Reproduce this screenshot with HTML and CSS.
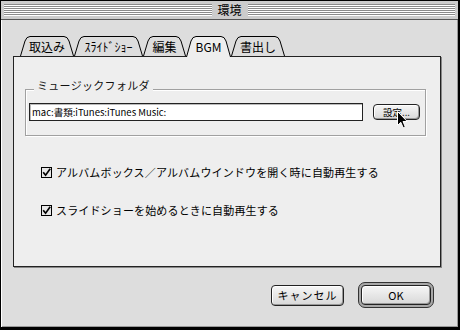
FILE: index.html
```html
<!DOCTYPE html>
<html lang="ja">
<head>
    <meta charset="UTF-8">
    <title>環境</title>
    <link rel="stylesheet" href="styles.css">
</head>
<body>
    <div class="window">
        <div class="titlebar">
            <div class="stripes"></div>
            <div class="title">環境</div>
            <div class="stripes"></div>
        </div>

        <div class="tabs">
            <div class="tab" style="width:54px">
                <svg width="54" height="20"><path d="M0.5 20 L5 5 Q6.5 0.5 10 0.5 H44 Q47.5 0.5 49 5 L53.5 20"/></svg>
                <span>取込み</span>
            </div>
            <div class="tab" style="width:69px">
                <svg width="69" height="20"><path d="M0.5 20 L5 5 Q6.5 0.5 10 0.5 H59 Q62.5 0.5 64 5 L68.5 20"/></svg>
                <span>ｽﾗｲﾄﾞｼｮｰ</span>
            </div>
            <div class="tab" style="width:43px">
                <svg width="43" height="20"><path d="M0.5 20 L5 5 Q6.5 0.5 10 0.5 H33 Q36.5 0.5 38 5 L42.5 20"/></svg>
                <span>編集</span>
            </div>
            <div class="tab active" style="width:45px">
                <svg width="45" height="21"><path d="M0.5 21 L5 5 Q6.5 0.5 10 0.5 H35 Q38.5 0.5 40 5 L44.5 21"/></svg>
                <span>BGM</span>
            </div>
            <div class="tab" style="width:54px">
                <svg width="54" height="20"><path d="M0.5 20 L5 5 Q6.5 0.5 10 0.5 H44 Q47.5 0.5 49 5 L53.5 20"/></svg>
                <span>書出し</span>
            </div>
        </div>

        <div class="panel">
            <div class="group">
                <span class="group-label">ミュージックフォルダ</span>
                <div class="group-row">
                    <div class="field">mac:書類:iTunes:iTunes Music:</div>
                    <div class="btn btn-small">
                        設定...
                        <svg class="cursor" width="11" height="18"><path d="M0.5 0.5 L0.5 14.5 L3.8 11.3 L6.2 16.8 L8.3 15.9 L6 10.5 L10.3 10.5 Z"/></svg>
                    </div>
                </div>
            </div>

            <div class="checks">
                <label class="check">
                    <span class="box"><svg width="9" height="9"><path d="M1.2 4.2 L3.6 7.2 L8.2 0.8"/></svg></span>
                    アルバムボックス／アルバムウインドウを開く時に自動再生する
                </label>
                <label class="check">
                    <span class="box"><svg width="9" height="9"><path d="M1.2 4.2 L3.6 7.2 L8.2 0.8"/></svg></span>
                    スライドショーを始めるときに自動再生する
                </label>
            </div>
        </div>

        <div class="buttons">
            <div class="btn btn-cancel">キャンセル</div>
            <div class="default">
                <div class="btn btn-ok">OK</div>
            </div>
        </div>
    </div>
</body>
</html>
```

FILE: styles.css
```css
body {
    margin: 0;
    font-family: "Noto Sans CJK JP", "Liberation Sans", sans-serif;
    font-size: 11px;
    color: #000;
    background: #fff;
}
.window {
    width: 460px;
    height: 330px;
    box-sizing: border-box;
    border: 1px solid #000;
    border-right-width: 2px;
    border-bottom-width: 3px;
    background: #dddddd;
    box-shadow: inset 1px 1px 0 #fff, inset -1px -1px 0 #999;
}
.titlebar {
    display: flex;
    align-items: center;
    height: 18px;
    padding: 0 3px;
    background: #cccccc;
    border-bottom: 1px solid #555;
}
.stripes {
    flex: 1;
    height: 12px;
    background: repeating-linear-gradient(to bottom, #8a8a8a 0 1px, #fff 1px 2px);
}
.title {
    padding: 0 6px;
    font-size: 12px;
    line-height: 18px;
}

/* tabs */
.tabs {
    display: flex;
    height: 20px;
    margin: 16px 0 0 19px;
}
.tab {
    position: relative;
    height: 20px;
    display: flex;
    align-items: center;
    justify-content: center;
    font-size: 12px;
}
.tab svg {
    position: absolute;
    left: 0;
    top: 0;
}
.tab path {
    fill: #dddddd;
    stroke: #000;
    stroke-width: 1;
}
.tab span {
    position: relative;
    line-height: 14px;
    padding-top: 1px;
}
.tab.active {
    z-index: 1;
}
.tab.active path {
    fill: #eeeeee;
}

/* panel */
.panel {
    width: 428px;
    height: 211px;
    margin-left: 12px;
    box-sizing: border-box;
    border: 1px solid #222;
    background: #eeeeee;
    box-shadow: 1px 1px 0 #888;
}
.group {
    position: relative;
    width: 401px;
    height: 47px;
    margin: 32px 0 0 11px;
    padding: 13px 0 0 3px;
    box-sizing: border-box;
    border: 1px solid #a0a0a0;
    box-shadow: 1px 1px 0 #fff, inset 1px 1px 0 #fff;
}
.group-label {
    position: absolute;
    left: 8px;
    top: -11px;
    padding: 0 3px;
    background: #eeeeee;
    line-height: 12px;
    letter-spacing: 0.3px;
    color: #111;
}
.group-row {
    display: flex;
    align-items: center;
}
.field {
    width: 334px;
    height: 18px;
    box-sizing: border-box;
    border: 1px solid #222;
    background: #fff;
    box-shadow: inset 1px 1px 0 #bbb;
    padding-left: 2px;
    font-size: 9.5px;
    line-height: 16px;
    white-space: nowrap;
}

/* buttons */
.btn {
    position: relative;
    display: flex;
    align-items: center;
    justify-content: center;
    box-sizing: border-box;
    border: 1px solid #222;
    border-radius: 4px;
    background: linear-gradient(#f6f6f6, #d8d8d8);
    box-shadow: inset 1px 1px 0 #fff, inset -1px -1px 0 #999;
}
.btn-small {
    width: 47px;
    height: 16px;
    margin-left: 10px;
    font-size: 9.5px;
    line-height: 14px;
}
.cursor {
    position: absolute;
    left: 23px;
    top: 6px;
}
.cursor path {
    fill: #000;
    stroke: #fff;
    stroke-width: 1;
}
.buttons {
    display: flex;
    justify-content: flex-end;
    align-items: center;
    margin-top: 15px;
    padding-right: 24px;
}
.btn-cancel {
    width: 73px;
    height: 21px;
    margin-right: 14px;
    letter-spacing: 1px;
}
.default {
    padding: 2px;
    border: 1px solid #333;
    border-radius: 7px;
    background: #a8a8a8;
}
.btn-ok {
    width: 70px;
    height: 20px;
}

/* checkboxes */
.checks {
    margin: 28px 0 0 27px;
}
.check {
    display: flex;
    align-items: center;
    height: 16px;
    letter-spacing: 0.15px;
    margin-bottom: 22px;
}
.box {
    width: 11px;
    height: 11px;
    box-sizing: border-box;
    border: 1px solid #000;
    background: #e8e8e8;
    margin-right: 4px;
    display: flex;
    align-items: center;
    justify-content: center;
}
.box path {
    fill: none;
    stroke: #000;
    stroke-width: 1.7;
}
```
